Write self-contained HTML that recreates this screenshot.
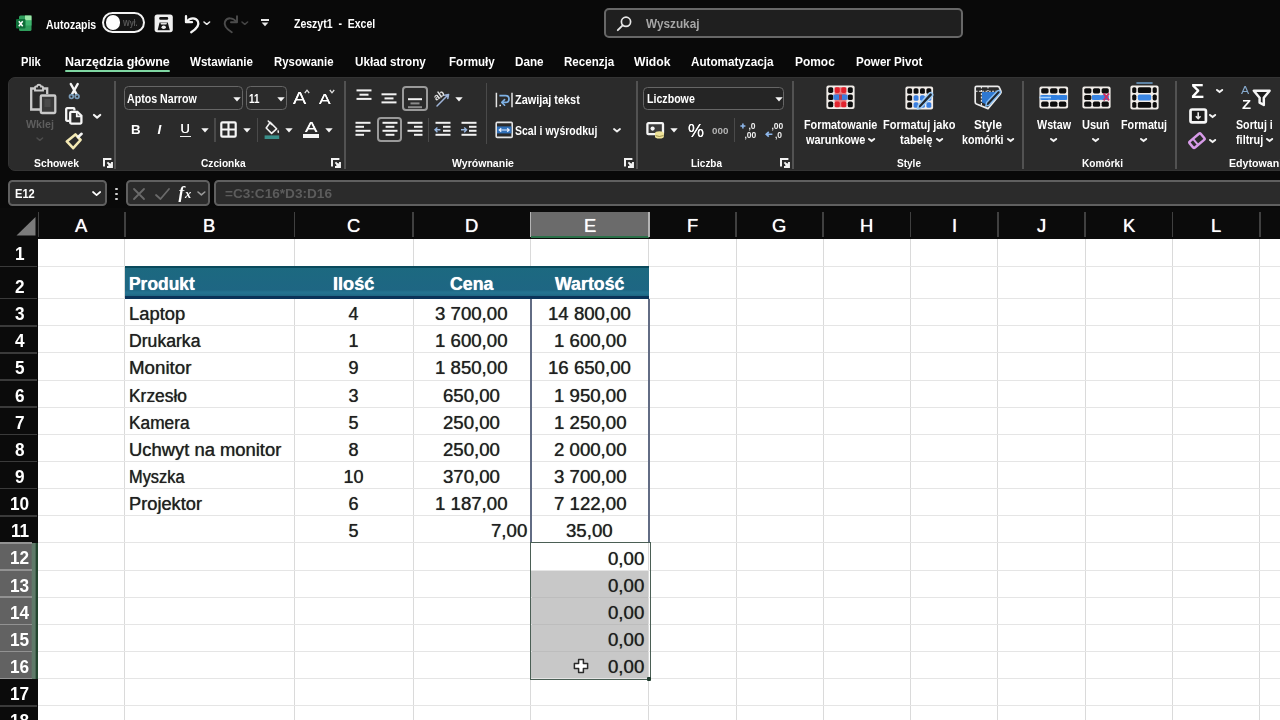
<!DOCTYPE html>
<html><head><meta charset="utf-8"><title>Zeszyt1 - Excel</title>
<style>
html,body{margin:0;padding:0;overflow:hidden}
body{width:1280px;height:720px;overflow:hidden;position:relative;background:#090909;font-family:"Liberation Sans",sans-serif}
.t{position:absolute;white-space:pre;transform-origin:0 50%;display:block}
.b{position:absolute;box-sizing:border-box;display:block}
svg{overflow:visible}
#blur{position:absolute;left:0;top:0;width:1310px;height:750px;filter:blur(0.45px)}
#clip{position:absolute;left:0;top:0;width:1280px;height:720px;overflow:hidden}
</style></head><body><div id="clip"><div id="blur">
<div class="b" style="left:37.70px;top:238.50px;width:1272.30px;height:511.50px;background:#fff"></div>
<div class="b" style="left:125.00px;top:266.30px;width:524.20px;height:32.50px;background:linear-gradient(#1c6980 0,#1e6683 78%,#247290 86%,#247290 90%,#1e6683 100%);border-top:2.5px solid #0a4a5c;border-bottom:3px solid #0a3258"></div>
<div class="b" style="left:531.00px;top:570.10px;width:117.70px;height:108.60px;background:#c8c8c8"></div>
<div class="b" style="left:124.20px;top:238.00px;width:1.00px;height:512.00px;background:#dadada"></div>
<div class="b" style="left:293.90px;top:238.00px;width:1.00px;height:512.00px;background:#dadada"></div>
<div class="b" style="left:412.70px;top:238.00px;width:1.00px;height:512.00px;background:#dadada"></div>
<div class="b" style="left:530.10px;top:238.00px;width:1.00px;height:512.00px;background:#dadada"></div>
<div class="b" style="left:648.20px;top:238.00px;width:1.00px;height:512.00px;background:#dadada"></div>
<div class="b" style="left:735.50px;top:238.00px;width:1.00px;height:512.00px;background:#dadada"></div>
<div class="b" style="left:822.80px;top:238.00px;width:1.00px;height:512.00px;background:#dadada"></div>
<div class="b" style="left:910.10px;top:238.00px;width:1.00px;height:512.00px;background:#dadada"></div>
<div class="b" style="left:997.40px;top:238.00px;width:1.00px;height:512.00px;background:#dadada"></div>
<div class="b" style="left:1084.70px;top:238.00px;width:1.00px;height:512.00px;background:#dadada"></div>
<div class="b" style="left:1172.00px;top:238.00px;width:1.00px;height:512.00px;background:#dadada"></div>
<div class="b" style="left:1259.30px;top:238.00px;width:1.00px;height:512.00px;background:#dadada"></div>
<div class="b" style="left:37.70px;top:265.80px;width:1272.30px;height:1.00px;background:#e5e5e5"></div>
<div class="b" style="left:37.70px;top:298.10px;width:1272.30px;height:1.00px;background:#e5e5e5"></div>
<div class="b" style="left:37.70px;top:325.25px;width:1272.30px;height:1.00px;background:#e5e5e5"></div>
<div class="b" style="left:37.70px;top:352.40px;width:1272.30px;height:1.00px;background:#e5e5e5"></div>
<div class="b" style="left:37.70px;top:379.55px;width:1272.30px;height:1.00px;background:#e5e5e5"></div>
<div class="b" style="left:37.70px;top:406.70px;width:1272.30px;height:1.00px;background:#e5e5e5"></div>
<div class="b" style="left:37.70px;top:433.85px;width:1272.30px;height:1.00px;background:#e5e5e5"></div>
<div class="b" style="left:37.70px;top:461.00px;width:1272.30px;height:1.00px;background:#e5e5e5"></div>
<div class="b" style="left:37.70px;top:488.15px;width:1272.30px;height:1.00px;background:#e5e5e5"></div>
<div class="b" style="left:37.70px;top:515.30px;width:1272.30px;height:1.00px;background:#e5e5e5"></div>
<div class="b" style="left:37.70px;top:542.45px;width:1272.30px;height:1.00px;background:#e5e5e5"></div>
<div class="b" style="left:37.70px;top:569.60px;width:1272.30px;height:1.00px;background:#e5e5e5"></div>
<div class="b" style="left:37.70px;top:596.75px;width:1272.30px;height:1.00px;background:#e5e5e5"></div>
<div class="b" style="left:37.70px;top:623.90px;width:1272.30px;height:1.00px;background:#e5e5e5"></div>
<div class="b" style="left:37.70px;top:651.05px;width:1272.30px;height:1.00px;background:#e5e5e5"></div>
<div class="b" style="left:37.70px;top:678.20px;width:1272.30px;height:1.00px;background:#e5e5e5"></div>
<div class="b" style="left:37.70px;top:705.35px;width:1272.30px;height:1.00px;background:#e5e5e5"></div>
<div class="b" style="left:37.70px;top:732.50px;width:1272.30px;height:1.00px;background:#e5e5e5"></div>
<div class="b" style="left:125.00px;top:266.30px;width:524.20px;height:32.50px;background:linear-gradient(#1c6980 0,#1e6683 78%,#247290 86%,#247290 90%,#1e6683 100%);border-top:2.5px solid #0a4a5c;border-bottom:3px solid #0a3258"></div>
<div class="b" style="left:531.50px;top:570.60px;width:116.70px;height:107.60px;background:#c8c8c8"></div>
<div class="b" style="left:531.50px;top:596.75px;width:116.70px;height:1.00px;background:#bdbdbd"></div>
<div class="b" style="left:531.50px;top:623.90px;width:116.70px;height:1.00px;background:#bdbdbd"></div>
<div class="b" style="left:531.50px;top:651.05px;width:116.70px;height:1.00px;background:#bdbdbd"></div>
<div class="b" style="left:529.60px;top:298.80px;width:2.00px;height:244.15px;background:#626c84"></div>
<div class="b" style="left:647.80px;top:298.80px;width:2.00px;height:244.15px;background:#626c84"></div>
<div class="b" style="left:529.60px;top:541.75px;width:121.20px;height:137.95px;border:1.7px solid #4b5f55"></div>
<div class="b" style="left:647.20px;top:676.50px;width:4.00px;height:4.00px;background:#1f3b2d;border-radius:1px"></div>
<span class="t" style="left:129.40px;top:305.16px;font-size:18px;line-height:18px;font-weight:400;color:#202020;transform:scaleX(1.0207);text-shadow:0 0 0.7px #404040;">Laptop</span>
<span class="t" style="left:129.40px;top:332.31px;font-size:18px;line-height:18px;font-weight:400;color:#202020;transform:scaleX(0.9790);text-shadow:0 0 0.7px #404040;">Drukarka</span>
<span class="t" style="left:129.40px;top:359.46px;font-size:18px;line-height:18px;font-weight:400;color:#202020;transform:scaleX(1.0411);text-shadow:0 0 0.7px #404040;">Monitor</span>
<span class="t" style="left:129.40px;top:386.61px;font-size:18px;line-height:18px;font-weight:400;color:#202020;transform:scaleX(0.9662);text-shadow:0 0 0.7px #404040;">Krzesło</span>
<span class="t" style="left:129.40px;top:413.76px;font-size:18px;line-height:18px;font-weight:400;color:#202020;transform:scaleX(0.9598);text-shadow:0 0 0.7px #404040;">Kamera</span>
<span class="t" style="left:129.40px;top:440.91px;font-size:18px;line-height:18px;font-weight:400;color:#202020;transform:scaleX(1.0217);text-shadow:0 0 0.7px #404040;">Uchwyt na monitor</span>
<span class="t" style="left:129.40px;top:468.06px;font-size:18px;line-height:18px;font-weight:400;color:#202020;transform:scaleX(0.9096);text-shadow:0 0 0.7px #404040;">Myszka</span>
<span class="t" style="left:129.40px;top:495.21px;font-size:18px;line-height:18px;font-weight:400;color:#202020;transform:scaleX(1.0134);text-shadow:0 0 0.7px #404040;">Projektor</span>
<span class="t" style="left:348.59px;top:305.16px;font-size:18px;line-height:18px;font-weight:400;color:#202020;text-shadow:0 0 0.7px #404040;">4</span>
<span class="t" style="left:348.59px;top:332.31px;font-size:18px;line-height:18px;font-weight:400;color:#202020;text-shadow:0 0 0.7px #404040;">1</span>
<span class="t" style="left:348.59px;top:359.46px;font-size:18px;line-height:18px;font-weight:400;color:#202020;text-shadow:0 0 0.7px #404040;">9</span>
<span class="t" style="left:348.59px;top:386.61px;font-size:18px;line-height:18px;font-weight:400;color:#202020;text-shadow:0 0 0.7px #404040;">3</span>
<span class="t" style="left:348.59px;top:413.76px;font-size:18px;line-height:18px;font-weight:400;color:#202020;text-shadow:0 0 0.7px #404040;">5</span>
<span class="t" style="left:348.59px;top:440.91px;font-size:18px;line-height:18px;font-weight:400;color:#202020;text-shadow:0 0 0.7px #404040;">8</span>
<span class="t" style="left:343.58px;top:468.06px;font-size:18px;line-height:18px;font-weight:400;color:#202020;text-shadow:0 0 0.7px #404040;">10</span>
<span class="t" style="left:348.59px;top:495.21px;font-size:18px;line-height:18px;font-weight:400;color:#202020;text-shadow:0 0 0.7px #404040;">6</span>
<span class="t" style="left:348.59px;top:522.36px;font-size:18px;line-height:18px;font-weight:400;color:#202020;text-shadow:0 0 0.7px #404040;">5</span>
<span class="t" style="left:435.33px;top:305.16px;font-size:18px;line-height:18px;font-weight:400;color:#202020;transform:scaleX(1.0350);text-shadow:0 0 0.7px #404040;">3 700,00</span>
<span class="t" style="left:435.33px;top:332.31px;font-size:18px;line-height:18px;font-weight:400;color:#202020;transform:scaleX(1.0350);text-shadow:0 0 0.7px #404040;">1 600,00</span>
<span class="t" style="left:435.33px;top:359.46px;font-size:18px;line-height:18px;font-weight:400;color:#202020;transform:scaleX(1.0350);text-shadow:0 0 0.7px #404040;">1 850,00</span>
<span class="t" style="left:443.11px;top:386.61px;font-size:18px;line-height:18px;font-weight:400;color:#202020;transform:scaleX(1.0350);text-shadow:0 0 0.7px #404040;">650,00</span>
<span class="t" style="left:443.11px;top:413.76px;font-size:18px;line-height:18px;font-weight:400;color:#202020;transform:scaleX(1.0350);text-shadow:0 0 0.7px #404040;">250,00</span>
<span class="t" style="left:443.11px;top:440.91px;font-size:18px;line-height:18px;font-weight:400;color:#202020;transform:scaleX(1.0350);text-shadow:0 0 0.7px #404040;">250,00</span>
<span class="t" style="left:443.11px;top:468.06px;font-size:18px;line-height:18px;font-weight:400;color:#202020;transform:scaleX(1.0350);text-shadow:0 0 0.7px #404040;">370,00</span>
<span class="t" style="left:435.33px;top:495.21px;font-size:18px;line-height:18px;font-weight:400;color:#202020;transform:scaleX(1.0350);text-shadow:0 0 0.7px #404040;">1 187,00</span>
<span class="t" style="left:490.93px;top:522.36px;font-size:18px;line-height:18px;font-weight:400;color:#202020;transform:scaleX(1.0350);text-shadow:0 0 0.7px #404040;">7,00</span>
<span class="t" style="left:548.36px;top:305.16px;font-size:18px;line-height:18px;font-weight:400;color:#202020;transform:scaleX(1.0350);text-shadow:0 0 0.7px #404040;">14 800,00</span>
<span class="t" style="left:553.53px;top:332.31px;font-size:18px;line-height:18px;font-weight:400;color:#202020;transform:scaleX(1.0350);text-shadow:0 0 0.7px #404040;">1 600,00</span>
<span class="t" style="left:548.36px;top:359.46px;font-size:18px;line-height:18px;font-weight:400;color:#202020;transform:scaleX(1.0350);text-shadow:0 0 0.7px #404040;">16 650,00</span>
<span class="t" style="left:553.53px;top:386.61px;font-size:18px;line-height:18px;font-weight:400;color:#202020;transform:scaleX(1.0350);text-shadow:0 0 0.7px #404040;">1 950,00</span>
<span class="t" style="left:553.53px;top:413.76px;font-size:18px;line-height:18px;font-weight:400;color:#202020;transform:scaleX(1.0350);text-shadow:0 0 0.7px #404040;">1 250,00</span>
<span class="t" style="left:553.53px;top:440.91px;font-size:18px;line-height:18px;font-weight:400;color:#202020;transform:scaleX(1.0350);text-shadow:0 0 0.7px #404040;">2 000,00</span>
<span class="t" style="left:553.53px;top:468.06px;font-size:18px;line-height:18px;font-weight:400;color:#202020;transform:scaleX(1.0350);text-shadow:0 0 0.7px #404040;">3 700,00</span>
<span class="t" style="left:553.53px;top:495.21px;font-size:18px;line-height:18px;font-weight:400;color:#202020;transform:scaleX(1.0350);text-shadow:0 0 0.7px #404040;">7 122,00</span>
<span class="t" style="left:566.49px;top:522.36px;font-size:18px;line-height:18px;font-weight:400;color:#202020;transform:scaleX(1.0350);text-shadow:0 0 0.7px #404040;">35,00</span>
<span class="t" style="left:608.13px;top:549.51px;font-size:18px;line-height:18px;font-weight:400;color:#1c1c1c;transform:scaleX(1.0350);text-shadow:0 0 0.7px #404040;">0,00</span>
<span class="t" style="left:608.13px;top:576.66px;font-size:18px;line-height:18px;font-weight:400;color:#1c1c1c;transform:scaleX(1.0350);text-shadow:0 0 0.7px #404040;">0,00</span>
<span class="t" style="left:608.13px;top:603.81px;font-size:18px;line-height:18px;font-weight:400;color:#1c1c1c;transform:scaleX(1.0350);text-shadow:0 0 0.7px #404040;">0,00</span>
<span class="t" style="left:608.13px;top:630.96px;font-size:18px;line-height:18px;font-weight:400;color:#1c1c1c;transform:scaleX(1.0350);text-shadow:0 0 0.7px #404040;">0,00</span>
<span class="t" style="left:608.13px;top:658.11px;font-size:18px;line-height:18px;font-weight:400;color:#1c1c1c;transform:scaleX(1.0350);text-shadow:0 0 0.7px #404040;">0,00</span>
<span class="t" style="left:129.40px;top:275.79px;font-size:17.5px;line-height:17.5px;font-weight:700;color:#fff;transform:scaleX(0.9951);text-shadow:0 0 0.8px #fff;">Produkt</span>
<span class="t" style="left:332.85px;top:275.79px;font-size:17.5px;line-height:17.5px;font-weight:700;color:#fff;transform:scaleX(1.0403);text-shadow:0 0 0.8px #fff;">Ilość</span>
<span class="t" style="left:449.85px;top:275.79px;font-size:17.5px;line-height:17.5px;font-weight:700;color:#fff;transform:scaleX(1.0164);text-shadow:0 0 0.8px #fff;">Cena</span>
<span class="t" style="left:555.05px;top:275.79px;font-size:17.5px;line-height:17.5px;font-weight:700;color:#fff;transform:scaleX(1.0160);text-shadow:0 0 0.8px #fff;">Wartość</span>
<svg class="b" style="left:573.00px;top:658.00px;" width="16" height="16" viewBox="0 0 16 16"><path d="M5.6 1.4h4.8v4.2h4.2v4.8h-4.2v4.2H5.6v-4.2H1.4V5.6h4.2z" fill="#fff" stroke="#2a2a2a" stroke-width="1.5" stroke-linejoin="round"/></svg>
<div class="b" style="left:0.00px;top:207.50px;width:1310.00px;height:31.00px;background:#0b0b0b"></div>
<div class="b" style="left:530.60px;top:211.60px;width:118.10px;height:26.40px;background:#6b6b6b;border-bottom:2px solid #2a7048"></div>
<div class="b" style="left:37.60px;top:212.00px;width:1.80px;height:25.00px;background:#404040"></div>
<div class="b" style="left:123.80px;top:212.00px;width:1.80px;height:25.00px;background:#404040"></div>
<div class="b" style="left:293.50px;top:212.00px;width:1.80px;height:25.00px;background:#404040"></div>
<div class="b" style="left:412.30px;top:212.00px;width:1.80px;height:25.00px;background:#404040"></div>
<div class="b" style="left:529.70px;top:212.00px;width:1.80px;height:25.00px;background:#b4b4b4"></div>
<div class="b" style="left:647.80px;top:212.00px;width:1.80px;height:25.00px;background:#b4b4b4"></div>
<div class="b" style="left:735.10px;top:212.00px;width:1.80px;height:25.00px;background:#404040"></div>
<div class="b" style="left:822.40px;top:212.00px;width:1.80px;height:25.00px;background:#404040"></div>
<div class="b" style="left:909.70px;top:212.00px;width:1.80px;height:25.00px;background:#404040"></div>
<div class="b" style="left:997.00px;top:212.00px;width:1.80px;height:25.00px;background:#404040"></div>
<div class="b" style="left:1084.30px;top:212.00px;width:1.80px;height:25.00px;background:#404040"></div>
<div class="b" style="left:1171.60px;top:212.00px;width:1.80px;height:25.00px;background:#404040"></div>
<div class="b" style="left:1258.90px;top:212.00px;width:1.80px;height:25.00px;background:#404040"></div>
<span class="t" style="left:75.45px;top:216.32px;font-size:19px;line-height:19px;font-weight:400;color:#fff;transform:scaleX(0.9700);text-shadow:0 0 0.8px #fff;">A</span>
<span class="t" style="left:203.40px;top:216.32px;font-size:19px;line-height:19px;font-weight:400;color:#fff;transform:scaleX(0.9700);text-shadow:0 0 0.8px #fff;">B</span>
<span class="t" style="left:347.14px;top:216.32px;font-size:19px;line-height:19px;font-weight:400;color:#fff;transform:scaleX(0.9700);text-shadow:0 0 0.8px #fff;">C</span>
<span class="t" style="left:465.24px;top:216.32px;font-size:19px;line-height:19px;font-weight:400;color:#fff;transform:scaleX(0.9700);text-shadow:0 0 0.8px #fff;">D</span>
<span class="t" style="left:583.50px;top:216.32px;font-size:19px;line-height:19px;font-weight:400;color:#fff;transform:scaleX(0.9700);text-shadow:0 0 0.8px #fff;">E</span>
<span class="t" style="left:686.72px;top:216.32px;font-size:19px;line-height:19px;font-weight:400;color:#fff;transform:scaleX(0.9700);text-shadow:0 0 0.8px #fff;">F</span>
<span class="t" style="left:772.48px;top:216.32px;font-size:19px;line-height:19px;font-weight:400;color:#fff;transform:scaleX(0.9700);text-shadow:0 0 0.8px #fff;">G</span>
<span class="t" style="left:860.29px;top:216.32px;font-size:19px;line-height:19px;font-weight:400;color:#fff;transform:scaleX(0.9700);text-shadow:0 0 0.8px #fff;">H</span>
<span class="t" style="left:951.69px;top:216.32px;font-size:19px;line-height:19px;font-weight:400;color:#fff;transform:scaleX(0.9700);text-shadow:0 0 0.8px #fff;">I</span>
<span class="t" style="left:1036.94px;top:216.32px;font-size:19px;line-height:19px;font-weight:400;color:#fff;transform:scaleX(0.9700);text-shadow:0 0 0.8px #fff;">J</span>
<span class="t" style="left:1122.70px;top:216.32px;font-size:19px;line-height:19px;font-weight:400;color:#fff;transform:scaleX(0.9700);text-shadow:0 0 0.8px #fff;">K</span>
<span class="t" style="left:1211.02px;top:216.32px;font-size:19px;line-height:19px;font-weight:400;color:#fff;transform:scaleX(0.9700);text-shadow:0 0 0.8px #fff;">L</span>
<svg class="b" style="left:15.00px;top:216.00px;" width="22" height="20" viewBox="0 0 22 20"><path d="M20.5 1 V19.5 H1.5z" fill="#7b7b7b"/></svg>
<div class="b" style="left:0.00px;top:238.00px;width:37.70px;height:512.00px;background:#0b0b0b"></div>
<div class="b" style="left:0.00px;top:542.95px;width:37.70px;height:135.75px;background:linear-gradient(90deg,#626262 0,#626262 31.2px,#5f7a69 32.2px,#5f7a69 35.2px,#23452f 36px);"></div>
<div class="b" style="left:0.00px;top:265.50px;width:37.00px;height:1.60px;background:#3a3a3a"></div>
<div class="b" style="left:0.00px;top:297.80px;width:37.00px;height:1.60px;background:#3a3a3a"></div>
<div class="b" style="left:0.00px;top:324.95px;width:37.00px;height:1.60px;background:#3a3a3a"></div>
<div class="b" style="left:0.00px;top:352.10px;width:37.00px;height:1.60px;background:#3a3a3a"></div>
<div class="b" style="left:0.00px;top:379.25px;width:37.00px;height:1.60px;background:#3a3a3a"></div>
<div class="b" style="left:0.00px;top:406.40px;width:37.00px;height:1.60px;background:#3a3a3a"></div>
<div class="b" style="left:0.00px;top:433.55px;width:37.00px;height:1.60px;background:#3a3a3a"></div>
<div class="b" style="left:0.00px;top:460.70px;width:37.00px;height:1.60px;background:#3a3a3a"></div>
<div class="b" style="left:0.00px;top:487.85px;width:37.00px;height:1.60px;background:#3a3a3a"></div>
<div class="b" style="left:0.00px;top:515.00px;width:37.00px;height:1.60px;background:#3a3a3a"></div>
<div class="b" style="left:0.00px;top:542.15px;width:32.20px;height:1.60px;background:#929292"></div>
<div class="b" style="left:0.00px;top:569.30px;width:32.20px;height:1.60px;background:#929292"></div>
<div class="b" style="left:0.00px;top:596.45px;width:32.20px;height:1.60px;background:#929292"></div>
<div class="b" style="left:0.00px;top:623.60px;width:32.20px;height:1.60px;background:#929292"></div>
<div class="b" style="left:0.00px;top:650.75px;width:32.20px;height:1.60px;background:#929292"></div>
<div class="b" style="left:0.00px;top:677.90px;width:32.20px;height:1.60px;background:#929292"></div>
<div class="b" style="left:0.00px;top:705.05px;width:37.00px;height:1.60px;background:#3a3a3a"></div>
<div class="b" style="left:0.00px;top:732.20px;width:37.00px;height:1.60px;background:#3a3a3a"></div>
<span class="t" style="left:14.61px;top:245.14px;font-size:18.5px;line-height:18.5px;font-weight:700;color:#fff;transform:scaleX(0.9300);">1</span>
<span class="t" style="left:14.61px;top:277.84px;font-size:18.5px;line-height:18.5px;font-weight:700;color:#fff;transform:scaleX(0.9300);">2</span>
<span class="t" style="left:14.61px;top:305.14px;font-size:18.5px;line-height:18.5px;font-weight:700;color:#fff;transform:scaleX(0.9300);">3</span>
<span class="t" style="left:14.61px;top:332.29px;font-size:18.5px;line-height:18.5px;font-weight:700;color:#fff;transform:scaleX(0.9300);">4</span>
<span class="t" style="left:14.61px;top:359.44px;font-size:18.5px;line-height:18.5px;font-weight:700;color:#fff;transform:scaleX(0.9300);">5</span>
<span class="t" style="left:14.61px;top:386.59px;font-size:18.5px;line-height:18.5px;font-weight:700;color:#fff;transform:scaleX(0.9300);">6</span>
<span class="t" style="left:14.61px;top:413.74px;font-size:18.5px;line-height:18.5px;font-weight:700;color:#fff;transform:scaleX(0.9300);">7</span>
<span class="t" style="left:14.61px;top:440.89px;font-size:18.5px;line-height:18.5px;font-weight:700;color:#fff;transform:scaleX(0.9300);">8</span>
<span class="t" style="left:14.61px;top:468.04px;font-size:18.5px;line-height:18.5px;font-weight:700;color:#fff;transform:scaleX(0.9300);">9</span>
<span class="t" style="left:10.23px;top:495.19px;font-size:18.5px;line-height:18.5px;font-weight:700;color:#fff;transform:scaleX(0.9300);">10</span>
<span class="t" style="left:10.70px;top:522.34px;font-size:18.5px;line-height:18.5px;font-weight:700;color:#fff;transform:scaleX(0.9300);">11</span>
<span class="t" style="left:10.23px;top:549.49px;font-size:18.5px;line-height:18.5px;font-weight:700;color:#fff;transform:scaleX(0.9300);">12</span>
<span class="t" style="left:10.23px;top:576.64px;font-size:18.5px;line-height:18.5px;font-weight:700;color:#fff;transform:scaleX(0.9300);">13</span>
<span class="t" style="left:10.23px;top:603.79px;font-size:18.5px;line-height:18.5px;font-weight:700;color:#fff;transform:scaleX(0.9300);">14</span>
<span class="t" style="left:10.23px;top:630.94px;font-size:18.5px;line-height:18.5px;font-weight:700;color:#fff;transform:scaleX(0.9300);">15</span>
<span class="t" style="left:10.23px;top:658.09px;font-size:18.5px;line-height:18.5px;font-weight:700;color:#fff;transform:scaleX(0.9300);">16</span>
<span class="t" style="left:10.23px;top:685.24px;font-size:18.5px;line-height:18.5px;font-weight:700;color:#fff;transform:scaleX(0.9300);">17</span>
<span class="t" style="left:10.23px;top:712.39px;font-size:18.5px;line-height:18.5px;font-weight:700;color:#fff;transform:scaleX(0.9300);">18</span>
<span class="t" style="left:10.23px;top:739.54px;font-size:18.5px;line-height:18.5px;font-weight:700;color:#fff;transform:scaleX(0.9300);">19</span>
<div class="b" style="left:7.50px;top:180.20px;width:99.50px;height:25.80px;background:#2b2b2b;border:2px solid #606060;border-radius:4.5px"></div>
<span class="t" style="left:15.00px;top:187.62px;font-size:12.5px;line-height:12.5px;font-weight:700;color:#fff;transform:scaleX(0.8899);">E12</span>
<svg class="b" style="left:92.00px;top:191.20px;" width="9.2" height="6.1" viewBox="0 0 9.2 6.1"><path d="M1 1 L4.6 4.1 L8.2 1" fill="none" stroke="#fff" stroke-width="1.7" stroke-linecap="round" stroke-linejoin="round"/></svg>
<div class="b" style="left:115.40px;top:187.50px;width:2.20px;height:2.20px;background:#d0d0d0;border-radius:1px"></div>
<div class="b" style="left:115.40px;top:192.50px;width:2.20px;height:2.20px;background:#d0d0d0;border-radius:1px"></div>
<div class="b" style="left:115.40px;top:197.50px;width:2.20px;height:2.20px;background:#d0d0d0;border-radius:1px"></div>
<div class="b" style="left:125.50px;top:180.20px;width:84.00px;height:25.80px;background:#2b2b2b;border:2px solid #606060;border-radius:4.5px"></div>
<svg class="b" style="left:132.00px;top:186.50px;" width="14" height="14" viewBox="0 0 14 14"><path d="M2 2 L12 12 M12 2 L2 12" stroke="#6a6a6a" stroke-width="1.8" stroke-linecap="round" fill="none"/></svg>
<svg class="b" style="left:154.00px;top:186.50px;" width="17" height="14" viewBox="0 0 17 14"><path d="M2 8 L6.5 12 L15 2" stroke="#6a6a6a" stroke-width="1.8" stroke-linecap="round" stroke-linejoin="round" fill="none"/></svg>
<span class="t" style="left:178.5px;top:183.5px;font-family:'Liberation Serif',serif;font-style:italic;font-weight:700;font-size:17px;line-height:17px;color:#fff">f</span>
<span class="t" style="left:185px;top:187.5px;font-family:'Liberation Serif',serif;font-style:italic;font-weight:700;font-size:12.5px;line-height:13px;color:#fff">x</span>
<svg class="b" style="left:197.20px;top:191.30px;" width="8.8" height="5.9" viewBox="0 0 8.8 5.9"><path d="M1 1 L4.4 3.9 L7.8 1" fill="none" stroke="#9a9a9a" stroke-width="1.6" stroke-linecap="round" stroke-linejoin="round"/></svg>
<div class="b" style="left:214.00px;top:180.20px;width:1080.00px;height:25.80px;background:#2b2b2b;border:2px solid #606060;border-radius:4.5px"></div>
<span class="t" style="left:225.00px;top:187.82px;font-size:12.5px;line-height:12.5px;font-weight:700;color:#5c5c5c;transform:scaleX(1.0884);">=C3:C16*D3:D16</span>
<svg class="b" style="left:15.50px;top:15.00px;" width="16" height="17" viewBox="0 0 16 17"><rect x="3" y="0.5" width="12.5" height="15.5" rx="1.5" fill="#2f9e5c"/><rect x="9" y="0.5" width="6.5" height="5" fill="#9be8a8"/><rect x="9" y="5.5" width="6.5" height="5" fill="#3fb56f"/><rect x="0" y="4" width="9.5" height="9.5" rx="1" fill="#0e6e38"/><path d="M2.8 6.3 L6.7 11.3 M6.7 6.3 L2.8 11.3" stroke="#fff" stroke-width="1.5"/></svg>
<span class="t" style="left:45.80px;top:18.64px;font-size:12px;line-height:12px;font-weight:700;color:#fff;transform:scaleX(0.8754);">Autozapis</span>
<div class="b" style="left:102.30px;top:12.00px;width:42.40px;height:21.00px;border:2.4px solid #f4f4f4;border-radius:11px;background:#141414"></div>
<div class="b" style="left:105.80px;top:15.40px;width:14.40px;height:14.20px;background:#fff;border-radius:7.2px"></div>
<span class="t" style="left:123.40px;top:19.20px;font-size:8.5px;line-height:8.5px;font-weight:700;color:#585858;transform:scaleX(0.8426);">Wył.</span>
<svg class="b" style="left:153.50px;top:14.00px;" width="19.5" height="19" viewBox="0 0 19.5 19"><rect x="0.6" y="0.6" width="18.2" height="17.6" rx="2.6" fill="#f0f0f0"/><rect x="5.2" y="3" width="9" height="2.8" rx="1.2" fill="#141414"/><path d="M3.6 16.2 L5.6 8.6 H13.8 L15.8 16.2z" fill="#141414"/><ellipse cx="9.7" cy="13.2" rx="2.2" ry="1.7" fill="#f0f0f0"/><path d="M6.4 8.8 H13 L12.4 10.6 H7z" fill="#e0e0e0"/></svg>
<svg class="b" style="left:184.00px;top:13.50px;" width="17" height="20" viewBox="0 0 17 20"><path d="M2 2.2 V8.2 H8" fill="none" stroke="#f4f4f4" stroke-width="2.3" stroke-linecap="round" stroke-linejoin="round"/><path d="M2.6 7.8 C6 3.2 12.2 3.2 14 7.6 C15.6 11.6 12 15.2 7.2 18.2" fill="none" stroke="#f4f4f4" stroke-width="2.3" stroke-linecap="round"/></svg>
<svg class="b" style="left:203.40px;top:21.10px;" width="7.6" height="5.3" viewBox="0 0 7.6 5.3"><path d="M1 1 L3.8 3.3 L6.6 1" fill="none" stroke="#e8e8e8" stroke-width="1.6" stroke-linecap="round" stroke-linejoin="round"/></svg>
<svg class="b" style="left:221.50px;top:13.50px;" width="17" height="20" viewBox="0 0 17 20"><g transform="translate(17,0) scale(-1,1)"><path d="M2 2.2 V8.2 H8" fill="none" stroke="#4c4c4c" stroke-width="1.9" stroke-linecap="round" stroke-linejoin="round"/><path d="M2.6 7.8 C6 3.2 12.2 3.2 14 7.6 C15.6 11.6 12 15.2 7.2 18.2" fill="none" stroke="#4c4c4c" stroke-width="1.9" stroke-linecap="round"/></g></svg>
<svg class="b" style="left:240.80px;top:21.10px;" width="7.6" height="5.3" viewBox="0 0 7.6 5.3"><path d="M1 1 L3.8 3.3 L6.6 1" fill="none" stroke="#444" stroke-width="1.6" stroke-linecap="round" stroke-linejoin="round"/></svg>
<div class="b" style="left:261.30px;top:19.20px;width:8.00px;height:1.80px;background:#e8e8e8"></div>
<svg class="b" style="left:261.30px;top:22.30px;" width="8" height="5" viewBox="0 0 8 5"><path d="M0.6 0.5 H7.4 L4 4.3z" fill="#e8e8e8"/></svg>
<span class="t" style="left:293.80px;top:18.04px;font-size:12px;line-height:12px;font-weight:700;color:#fff;transform:scaleX(0.8758);">Zeszyt1  -  Excel</span>
<div class="b" style="left:604.20px;top:7.80px;width:358.40px;height:30.40px;background:#1f1f1f;border:2px solid #676767;border-radius:5px"></div>
<svg class="b" style="left:616.00px;top:14.50px;" width="17" height="17" viewBox="0 0 17 17"><circle cx="10" cy="6.8" r="4.6" fill="none" stroke="#e6e6e6" stroke-width="1.7"/><path d="M6.6 10.4 L1.8 15.2" stroke="#e6e6e6" stroke-width="1.9" stroke-linecap="round"/></svg>
<span class="t" style="left:645.50px;top:17.62px;font-size:12.5px;line-height:12.5px;font-weight:700;color:#a6a6a6;transform:scaleX(0.9427);">Wyszukaj</span>
<span class="t" style="left:21.00px;top:54.77px;font-size:13.5px;line-height:13.5px;font-weight:700;color:#fff;transform:scaleX(0.8245);">Plik</span>
<span class="t" style="left:64.80px;top:54.77px;font-size:13.5px;line-height:13.5px;font-weight:700;color:#fff;transform:scaleX(0.9251);">Narzędzia główne</span>
<span class="t" style="left:189.50px;top:54.77px;font-size:13.5px;line-height:13.5px;font-weight:700;color:#fff;transform:scaleX(0.8568);">Wstawianie</span>
<span class="t" style="left:273.70px;top:54.77px;font-size:13.5px;line-height:13.5px;font-weight:700;color:#fff;transform:scaleX(0.8436);">Rysowanie</span>
<span class="t" style="left:355.40px;top:54.77px;font-size:13.5px;line-height:13.5px;font-weight:700;color:#fff;transform:scaleX(0.8657);">Układ strony</span>
<span class="t" style="left:449.00px;top:54.77px;font-size:13.5px;line-height:13.5px;font-weight:700;color:#fff;transform:scaleX(0.8598);">Formuły</span>
<span class="t" style="left:515.40px;top:54.77px;font-size:13.5px;line-height:13.5px;font-weight:700;color:#fff;transform:scaleX(0.8663);">Dane</span>
<span class="t" style="left:563.60px;top:54.77px;font-size:13.5px;line-height:13.5px;font-weight:700;color:#fff;transform:scaleX(0.8577);">Recenzja</span>
<span class="t" style="left:633.60px;top:54.77px;font-size:13.5px;line-height:13.5px;font-weight:700;color:#fff;transform:scaleX(0.9015);">Widok</span>
<span class="t" style="left:691.40px;top:54.77px;font-size:13.5px;line-height:13.5px;font-weight:700;color:#fff;transform:scaleX(0.8648);">Automatyzacja</span>
<span class="t" style="left:795.20px;top:54.77px;font-size:13.5px;line-height:13.5px;font-weight:700;color:#fff;transform:scaleX(0.8841);">Pomoc</span>
<span class="t" style="left:856.00px;top:54.77px;font-size:13.5px;line-height:13.5px;font-weight:700;color:#fff;transform:scaleX(0.8605);">Power Pivot</span>
<div class="b" style="left:64.80px;top:70.30px;width:105.00px;height:2.20px;background:#7fd6a2;border-radius:1px"></div>
<div class="b" style="left:8.00px;top:76.60px;width:1310.00px;height:94.90px;background:#2b2b2b;border-radius:7px;border:1px solid #343434"></div>
<div class="b" style="left:114.00px;top:81.00px;width:2.00px;height:88.00px;background:#525252"></div>
<div class="b" style="left:343.50px;top:81.00px;width:2.00px;height:88.00px;background:#525252"></div>
<div class="b" style="left:635.50px;top:81.00px;width:2.00px;height:88.00px;background:#525252"></div>
<div class="b" style="left:792.00px;top:81.00px;width:2.00px;height:88.00px;background:#525252"></div>
<div class="b" style="left:1022.00px;top:81.00px;width:2.00px;height:88.00px;background:#525252"></div>
<div class="b" style="left:1174.50px;top:81.00px;width:2.00px;height:88.00px;background:#525252"></div>
<span class="t" style="left:33.50px;top:158.27px;font-size:11.5px;line-height:11.5px;font-weight:700;color:#fff;transform:scaleX(0.9025);">Schowek</span>
<svg class="b" style="left:102.60px;top:157.60px;" width="10" height="10" viewBox="0 0 10 10"><path d="M1 8.4 V1 H8.4" fill="none" stroke="#f2f2f2" stroke-width="2"/><path d="M4 9 H9 V4 M9 9 L4.4 4.4" fill="none" stroke="#f2f2f2" stroke-width="1.9"/><rect x="5.4" y="5.4" width="3.6" height="3.6" fill="#f2f2f2"/></svg>
<svg class="b" style="left:28.50px;top:83.50px;" width="28.5" height="31" viewBox="0 0 28.5 31"><path d="M6 4.5 H2.2 V25.5 H11" fill="none" stroke="#cacaca" stroke-width="2.3"/><path d="M13.5 4.5 H18.2 V10" fill="none" stroke="#cacaca" stroke-width="2.3"/><path d="M6 6.5 V3.5 Q6 2.5 7 2.5 H8 Q8.3 0.8 10 0.8 Q11.8 0.8 12 2.5 H13 Q14 2.5 14 3.5 V6.5z" fill="none" stroke="#cacaca" stroke-width="1.9"/><rect x="11.8" y="11.5" width="14.5" height="17.5" rx="1" fill="#3a3a3a" stroke="#cacaca" stroke-width="2.3"/><rect x="15.5" y="15" width="6" height="8" fill="#4a4a4a"/></svg>
<span class="t" style="left:26.30px;top:118.87px;font-size:11.5px;line-height:11.5px;font-weight:700;color:#5e5e5e;transform:scaleX(0.9319);">Wklej</span>
<svg class="b" style="left:35.80px;top:137.20px;" width="7.6" height="5.3" viewBox="0 0 7.6 5.3"><path d="M1 1 L3.8 3.3 L6.6 1" fill="none" stroke="#4c4c4c" stroke-width="1.5" stroke-linecap="round" stroke-linejoin="round"/></svg>
<svg class="b" style="left:67.50px;top:82.50px;" width="12.5" height="17.5" viewBox="0 0 12.5 17.5"><path d="M2.8 1 L8.4 11 M9.7 1 L4.1 11" stroke="#f6f6f6" stroke-width="2.5" stroke-linecap="round" fill="none"/><circle cx="3.4" cy="13.6" r="1.9" fill="none" stroke="#7a9cba" stroke-width="1.7"/><circle cx="9.1" cy="13.6" r="1.9" fill="none" stroke="#7a9cba" stroke-width="1.7"/></svg>
<svg class="b" style="left:64.50px;top:107.00px;" width="18.5" height="18" viewBox="0 0 18.5 18"><path d="M4.4 13.8 H2.2 Q1.2 13.8 1.2 12.8 V2.2 Q1.2 1.2 2.2 1.2 H8.4 Q9.4 1.2 9.4 2.2 V3.6" fill="none" stroke="#f6f6f6" stroke-width="2.3"/><path d="M6.2 4.8 H12.4 L16.4 8.8 V15.6 Q16.4 16.6 15.4 16.6 H6.2 Q5.2 16.6 5.2 15.6 V5.8 Q5.2 4.8 6.2 4.8z" fill="#2b2b2b" stroke="#f6f6f6" stroke-width="2.3"/><path d="M11.8 5.2 V9.4 H16" fill="none" stroke="#f6f6f6" stroke-width="1.8"/></svg>
<svg class="b" style="left:92.70px;top:114.05px;" width="8.2" height="5.6" viewBox="0 0 8.2 5.6"><path d="M1 1 L4.1 3.6 L7.2 1" fill="none" stroke="#f4f4f4" stroke-width="2.2" stroke-linecap="round" stroke-linejoin="round"/></svg>
<svg class="b" style="left:65.00px;top:132.00px;" width="18.5" height="18" viewBox="0 0 18.5 18"><path d="M1.8 9.4 L10.4 2.4 L15.6 8 L8.2 16.2z" fill="none" stroke="#f3e9b4" stroke-width="2.6" stroke-linejoin="round"/><path d="M13.2 5 L16.6 1.8" stroke="#f6f6f6" stroke-width="2.6" stroke-linecap="round"/></svg>
<span class="t" style="left:200.70px;top:158.27px;font-size:11.5px;line-height:11.5px;font-weight:700;color:#fff;transform:scaleX(0.8832);">Czcionka</span>
<svg class="b" style="left:331.00px;top:157.60px;" width="10" height="10" viewBox="0 0 10 10"><path d="M1 8.4 V1 H8.4" fill="none" stroke="#f2f2f2" stroke-width="2"/><path d="M4 9 H9 V4 M9 9 L4.4 4.4" fill="none" stroke="#f2f2f2" stroke-width="1.9"/><rect x="5.4" y="5.4" width="3.6" height="3.6" fill="#f2f2f2"/></svg>
<div class="b" style="left:123.60px;top:86.40px;width:119.00px;height:24.00px;background:#2b2b2b;border:1.8px solid #666;border-radius:4.5px"></div>
<span class="t" style="left:127.40px;top:93.24px;font-size:12px;line-height:12px;font-weight:700;color:#fff;transform:scaleX(0.8871);">Aptos Narrow</span>
<svg class="b" style="left:232.60px;top:97.30px;" width="8" height="4.6" viewBox="0 0 8 4.6"><path d="M0.3 0.3 H7.7 L4.0 4.3999999999999995z" fill="#f6f6f6"/></svg>
<div class="b" style="left:245.60px;top:86.40px;width:41.00px;height:24.00px;background:#2b2b2b;border:1.8px solid #666;border-radius:4.5px"></div>
<span class="t" style="left:249.20px;top:93.24px;font-size:12px;line-height:12px;font-weight:700;color:#fff;transform:scaleX(0.8197);">11</span>
<svg class="b" style="left:276.60px;top:97.30px;" width="8" height="4.6" viewBox="0 0 8 4.6"><path d="M0.3 0.3 H7.7 L4.0 4.3999999999999995z" fill="#f6f6f6"/></svg>
<span class="t" style="left:292.60px;top:90.21px;font-size:17px;line-height:17px;font-weight:400;color:#fff;transform:scaleX(1.1636);text-shadow:0 0 0.6px #fff;">A</span>
<svg class="b" style="left:303.80px;top:89.00px;" width="6" height="5" viewBox="0 0 6 5"><path d="M0.8 4 L3 1.2 L5.2 4" stroke="#e0e0e0" stroke-width="1.3" fill="none"/></svg>
<span class="t" style="left:319.00px;top:91.48px;font-size:15.5px;line-height:15.5px;font-weight:400;color:#fff;transform:scaleX(1.1215);text-shadow:0 0 0.6px #fff;">A</span>
<svg class="b" style="left:329.20px;top:89.20px;" width="6" height="5" viewBox="0 0 6 5"><path d="M0.8 1 L3 3.8 L5.2 1" stroke="#e0e0e0" stroke-width="1.3" fill="none"/></svg>
<span class="t" style="left:130.80px;top:122.77px;font-size:13.5px;line-height:13.5px;font-weight:700;color:#fff;transform:scaleX(0.9846);">B</span>
<span class="t" style="left:157.6px;top:122.6px;font-size:13.5px;line-height:13.5px;font-weight:700;font-style:italic;color:#fff">I</span>
<span class="t" style="left:180.50px;top:122.40px;font-size:13px;line-height:13px;font-weight:400;color:#fff;text-shadow:0 0 0.6px #fff;">U</span>
<div class="b" style="left:180.00px;top:135.60px;width:10.60px;height:1.60px;background:#f0f0f0"></div>
<svg class="b" style="left:200.60px;top:127.50px;" width="8" height="4.6" viewBox="0 0 8 4.6"><path d="M0.3 0.3 H7.7 L4.0 4.3999999999999995z" fill="#f6f6f6"/></svg>
<div class="b" style="left:214.30px;top:118.00px;width:1.40px;height:24.00px;background:#4a4a4a"></div>
<svg class="b" style="left:219.50px;top:120.50px;" width="17" height="17" viewBox="0 0 17 17"><rect x="1.3" y="1.3" width="14.4" height="14.4" rx="1.2" fill="none" stroke="#f6f6f6" stroke-width="2.2"/><path d="M8.5 1.5 V15.5 M1.5 8.5 H15.5" stroke="#f6f6f6" stroke-width="2.1"/></svg>
<svg class="b" style="left:242.80px;top:127.50px;" width="8" height="4.6" viewBox="0 0 8 4.6"><path d="M0.3 0.3 H7.7 L4.0 4.3999999999999995z" fill="#f6f6f6"/></svg>
<div class="b" style="left:256.90px;top:118.00px;width:1.40px;height:24.00px;background:#4a4a4a"></div>
<svg class="b" style="left:263.00px;top:119.50px;" width="18.5" height="20" viewBox="0 0 18.5 20"><path d="M7.2 2.4 L13.6 8.8 L8.6 13.4 L3.2 8 z" fill="none" stroke="#f2f2f2" stroke-width="1.6" stroke-linejoin="round"/><path d="M5.2 1 L8.6 4.4" stroke="#f2f2f2" stroke-width="1.5" stroke-linecap="round"/><path d="M15 9.6 Q17 12.4 15.4 13.2 Q13.6 12.6 15 9.6z" fill="#f2f2f2"/><rect x="1.6" y="15.4" width="14.6" height="3.6" fill="#3a8f8a"/></svg>
<svg class="b" style="left:285.20px;top:127.50px;" width="8" height="4.6" viewBox="0 0 8 4.6"><path d="M0.3 0.3 H7.7 L4.0 4.3999999999999995z" fill="#f6f6f6"/></svg>
<span class="t" style="left:305.00px;top:120.33px;font-size:14.5px;line-height:14.5px;font-weight:400;color:#fff;transform:scaleX(1.2821);text-shadow:0 0 0.6px #fff;">A</span>
<div class="b" style="left:303.40px;top:134.40px;width:15.80px;height:3.80px;background:#f4f4f4"></div>
<svg class="b" style="left:325.20px;top:127.50px;" width="8" height="4.6" viewBox="0 0 8 4.6"><path d="M0.3 0.3 H7.7 L4.0 4.3999999999999995z" fill="#f6f6f6"/></svg>
<span class="t" style="left:452.40px;top:158.27px;font-size:11.5px;line-height:11.5px;font-weight:700;color:#fff;transform:scaleX(0.9181);">Wyrównanie</span>
<svg class="b" style="left:623.60px;top:157.60px;" width="10" height="10" viewBox="0 0 10 10"><path d="M1 8.4 V1 H8.4" fill="none" stroke="#f2f2f2" stroke-width="2"/><path d="M4 9 H9 V4 M9 9 L4.4 4.4" fill="none" stroke="#f2f2f2" stroke-width="1.9"/><rect x="5.4" y="5.4" width="3.6" height="3.6" fill="#f2f2f2"/></svg>
<svg class="b" style="left:353.60px;top:88.40px;" width="20" height="20" viewBox="0 0 20 20"><path d="M2.5 2.4000000000000004 H17.5" stroke="#f2f2f2" stroke-width="2.0"/><path d="M5.5 6.7 H14.5" stroke="#f2f2f2" stroke-width="2.0"/><path d="M2.5 10.9 H17.5" stroke="#f2f2f2" stroke-width="2.0"/></svg>
<svg class="b" style="left:379.20px;top:88.40px;" width="20" height="20" viewBox="0 0 20 20"><path d="M2.5 6.3 H17.5" stroke="#f2f2f2" stroke-width="2.0"/><path d="M5.5 10.4 H14.5" stroke="#f2f2f2" stroke-width="2.0"/><path d="M2.5 14.4 H17.5" stroke="#f2f2f2" stroke-width="2.0"/></svg>
<div class="b" style="left:402.40px;top:85.80px;width:25.20px;height:25.60px;background:#2a2a2a;border:2px solid #9a9a9a;border-radius:4px"></div>
<svg class="b" style="left:405.00px;top:88.80px;" width="20" height="20" viewBox="0 0 20 20"><path d="M3 10.2 H17" stroke="#f2f2f2" stroke-width="2.0"/></svg>
<svg class="b" style="left:405.00px;top:88.80px;" width="20" height="20" viewBox="0 0 20 20"><path d="M5.5 14.4 H14.5" stroke="#8c8c8c" stroke-width="2.0"/><path d="M3 18.2 H17" stroke="#8c8c8c" stroke-width="2.0"/></svg>
<svg class="b" style="left:432.00px;top:89.00px;" width="20" height="19" viewBox="0 0 20 19"><text x="2.2" y="10.2" font-family="Liberation Sans" font-size="9.5" font-weight="700" fill="#e4e4e4" transform="rotate(-35 6 8)">ab</text><path d="M5 17 L16.2 5.8 M16.6 5.4 L12.6 6.2 M16.6 5.4 L15.8 9.4" stroke="#9fb4d8" stroke-width="1.5" fill="none" stroke-linecap="round"/></svg>
<svg class="b" style="left:455.40px;top:96.90px;" width="8" height="4.6" viewBox="0 0 8 4.6"><path d="M0.3 0.3 H7.7 L4.0 4.3999999999999995z" fill="#f6f6f6"/></svg>
<div class="b" style="left:485.90px;top:83.00px;width:1.40px;height:61.00px;background:#4a4a4a"></div>
<svg class="b" style="left:495.00px;top:90.60px;" width="18.5" height="18" viewBox="0 0 18.5 18"><path d="M1.4 1.8 V16.2 M17 1.8 V16.2" stroke="#e4e4e4" stroke-width="1.5"/><path d="M4.4 4.6 H10.6 Q14 4.6 14 8 Q14 11.4 10.6 11.4 H7.6" fill="none" stroke="#7fb2e6" stroke-width="1.7"/><path d="M9.6 8.6 L6.8 11.4 L9.6 14.2" fill="none" stroke="#7fb2e6" stroke-width="1.6" stroke-linejoin="round" stroke-linecap="round"/><path d="M4.4 14.4 H6" stroke="#e4e4e4" stroke-width="1.5"/></svg>
<span class="t" style="left:514.60px;top:93.00px;font-size:13px;line-height:13px;font-weight:700;color:#fff;transform:scaleX(0.8382);">Zawijaj tekst</span>
<svg class="b" style="left:353.40px;top:119.40px;" width="20" height="20" viewBox="0 0 20 20"><path d="M2.5 3.8 H17.5" stroke="#f2f2f2" stroke-width="2.0"/><path d="M2.5 7.8 H11" stroke="#f2f2f2" stroke-width="2.0"/><path d="M2.5 11.8 H17.5" stroke="#f2f2f2" stroke-width="2.0"/><path d="M2.5 15.8 H11" stroke="#f2f2f2" stroke-width="2.0"/></svg>
<div class="b" style="left:377.40px;top:117.40px;width:24.80px;height:24.80px;background:#2a2a2a;border:2px solid #9a9a9a;border-radius:4px"></div>
<svg class="b" style="left:379.60px;top:119.40px;" width="20" height="20" viewBox="0 0 20 20"><path d="M2.5 3.8 H17.5" stroke="#f2f2f2" stroke-width="2.0"/><path d="M5.6 7.8 H14.4" stroke="#f2f2f2" stroke-width="2.0"/><path d="M2.5 11.8 H17.5" stroke="#f2f2f2" stroke-width="2.0"/><path d="M5.6 15.8 H14.4" stroke="#f2f2f2" stroke-width="2.0"/></svg>
<svg class="b" style="left:405.40px;top:119.40px;" width="20" height="20" viewBox="0 0 20 20"><path d="M2.5 3.8 H17.5" stroke="#f2f2f2" stroke-width="2.0"/><path d="M9 7.8 H17.5" stroke="#f2f2f2" stroke-width="2.0"/><path d="M2.5 11.8 H17.5" stroke="#f2f2f2" stroke-width="2.0"/><path d="M9 15.8 H17.5" stroke="#f2f2f2" stroke-width="2.0"/></svg>
<div class="b" style="left:427.90px;top:118.00px;width:1.40px;height:24.00px;background:#4a4a4a"></div>
<svg class="b" style="left:433.40px;top:119.40px;" width="20" height="20" viewBox="0 0 20 20"><path d="M2.5 3.8 H17.5" stroke="#f2f2f2" stroke-width="2.0"/><path d="M10 7.8 H17.5" stroke="#f2f2f2" stroke-width="2.0"/><path d="M10 11.8 H17.5" stroke="#f2f2f2" stroke-width="2.0"/><path d="M2.5 15.8 H17.5" stroke="#f2f2f2" stroke-width="2.0"/></svg>
<svg class="b" style="left:434.40px;top:125.60px;" width="8" height="8" viewBox="0 0 8 8"><path d="M6.4 3.8 H1.2 M3.4 1.4 L1 3.8 L3.4 6.2" stroke="#9ab8e0" stroke-width="1.4" fill="none"/></svg>
<svg class="b" style="left:458.60px;top:119.40px;" width="20" height="20" viewBox="0 0 20 20"><path d="M2.5 3.8 H17.5" stroke="#f2f2f2" stroke-width="2.0"/><path d="M10 7.8 H17.5" stroke="#f2f2f2" stroke-width="2.0"/><path d="M10 11.8 H17.5" stroke="#f2f2f2" stroke-width="2.0"/><path d="M2.5 15.8 H17.5" stroke="#f2f2f2" stroke-width="2.0"/></svg>
<svg class="b" style="left:459.80px;top:125.60px;" width="8" height="8" viewBox="0 0 8 8"><path d="M1 3.8 H6.4 M4.2 1.4 L6.6 3.8 L4.2 6.2" stroke="#9ab8e0" stroke-width="1.4" fill="none"/></svg>
<svg class="b" style="left:495.00px;top:121.00px;" width="18.5" height="18" viewBox="0 0 18.5 18"><rect x="1.2" y="1.4" width="16" height="15" rx="1" fill="none" stroke="#e4e4e4" stroke-width="1.6"/><rect x="2" y="5.4" width="14.4" height="7" fill="#2f6fb8"/><path d="M4.4 9 H14 M6.2 7.2 L4.2 9 L6.2 10.8 M12.2 7.2 L14.2 9 L12.2 10.8" stroke="#e8f0ff" stroke-width="1.2" fill="none"/></svg>
<span class="t" style="left:514.60px;top:124.00px;font-size:13px;line-height:13px;font-weight:700;color:#fff;transform:scaleX(0.8088);">Scal i wyśrodkuj</span>
<svg class="b" style="left:613.20px;top:127.90px;" width="8.0" height="5.5" viewBox="0 0 8.0 5.5"><path d="M1 1 L4.0 3.5 L7.0 1" fill="none" stroke="#f0f0f0" stroke-width="1.8" stroke-linecap="round" stroke-linejoin="round"/></svg>
<span class="t" style="left:691.10px;top:158.27px;font-size:11.5px;line-height:11.5px;font-weight:700;color:#fff;transform:scaleX(0.8660);">Liczba</span>
<svg class="b" style="left:780.20px;top:157.60px;" width="10" height="10" viewBox="0 0 10 10"><path d="M1 8.4 V1 H8.4" fill="none" stroke="#f2f2f2" stroke-width="2"/><path d="M4 9 H9 V4 M9 9 L4.4 4.4" fill="none" stroke="#f2f2f2" stroke-width="1.9"/><rect x="5.4" y="5.4" width="3.6" height="3.6" fill="#f2f2f2"/></svg>
<div class="b" style="left:643.20px;top:86.60px;width:141.00px;height:23.80px;background:#252525;border:1.8px solid #666;border-radius:4.5px"></div>
<span class="t" style="left:647.20px;top:93.12px;font-size:12.5px;line-height:12.5px;font-weight:700;color:#fff;transform:scaleX(0.8495);">Liczbowe</span>
<svg class="b" style="left:775.40px;top:97.10px;" width="8" height="4.6" viewBox="0 0 8 4.6"><path d="M0.3 0.3 H7.7 L4.0 4.3999999999999995z" fill="#f6f6f6"/></svg>
<svg class="b" style="left:645.50px;top:121.00px;" width="20" height="19" viewBox="0 0 20 19"><rect x="1.4" y="2.2" width="15.6" height="11" rx="1" fill="#3a3a3a" stroke="#f4f4f4" stroke-width="2.3"/><circle cx="6.6" cy="7.6" r="2.1" fill="#f4f4f4"/><ellipse cx="13.4" cy="12.4" rx="4.4" ry="2.1" fill="#efe39a"/><path d="M9 12.4 V15.6 Q9 17.6 13.4 17.6 Q17.8 17.6 17.8 15.6 V12.4" fill="#efe39a"/><path d="M9.6 14.6 Q13.4 16.4 17.2 14.6" stroke="#8a7f3a" stroke-width="0.8" fill="none"/></svg>
<svg class="b" style="left:670.20px;top:128.30px;" width="8" height="4.6" viewBox="0 0 8 4.6"><path d="M0.3 0.3 H7.7 L4.0 4.3999999999999995z" fill="#f6f6f6"/></svg>
<span class="t" style="left:688.40px;top:121.12px;font-size:19px;line-height:19px;font-weight:400;color:#fff;transform:scaleX(0.9464);text-shadow:0 0 0.6px #fff;">%</span>
<span class="t" style="left:712.20px;top:125.56px;font-size:9.5px;line-height:9.5px;font-weight:700;color:#b4b4b4;transform:scaleX(1.0341);">000</span>
<div class="b" style="left:733.50px;top:118.00px;width:1.40px;height:24.00px;background:#4a4a4a"></div>
<svg class="b" style="left:737.50px;top:120.00px;" width="22" height="20" viewBox="0 0 22 20"><path d="M2.4 6 H7.4 M4.9 3.5 V8.5" stroke="#8db6ea" stroke-width="1.6"/><text x="10.4" y="9" font-family="Liberation Sans" font-size="8.5" font-weight="700" fill="#f0f0f0">,0</text><text x="6.4" y="18" font-family="Liberation Sans" font-size="8.5" font-weight="700" fill="#f0f0f0">,00</text></svg>
<svg class="b" style="left:763.50px;top:120.00px;" width="22" height="20" viewBox="0 0 22 20"><text x="7.4" y="9" font-family="Liberation Sans" font-size="8.5" font-weight="700" fill="#f0f0f0">,00</text><path d="M2.4 14.2 H8.4 M4.8 11.8 L2.2 14.2 L4.8 16.6" stroke="#8db6ea" stroke-width="1.6" fill="none"/><text x="11" y="18" font-family="Liberation Sans" font-size="8.5" font-weight="700" fill="#f0f0f0">,0</text></svg>
<span class="t" style="left:896.80px;top:158.27px;font-size:11.5px;line-height:11.5px;font-weight:700;color:#fff;transform:scaleX(0.8727);">Style</span>
<svg class="b" style="left:826.10px;top:85.45px;" width="29" height="24.5" viewBox="0 0 29 24.5"><rect x="0.4" y="0.4" width="28.2" height="23.7" rx="2" fill="#f0ece8"/><rect x="2.20" y="2.20" width="5.03" height="5.70" rx="1.6" fill="#0d0d0d"/><rect x="8.73" y="2.20" width="5.03" height="5.70" rx="1.6" fill="#e2222e"/><rect x="15.25" y="2.20" width="5.03" height="5.70" rx="1.6" fill="#e2222e"/><rect x="21.78" y="2.20" width="5.03" height="5.70" rx="1.6" fill="#0d0d0d"/><rect x="2.20" y="9.40" width="5.03" height="5.70" rx="1.6" fill="#0d0d0d"/><rect x="8.73" y="9.40" width="5.03" height="5.70" rx="1.6" fill="#3a7fe0"/><rect x="15.25" y="9.40" width="5.03" height="5.70" rx="1.6" fill="#3a7fe0"/><rect x="21.78" y="9.40" width="5.03" height="5.70" rx="1.6" fill="#0d0d0d"/><rect x="2.20" y="16.60" width="5.03" height="5.70" rx="1.6" fill="#0d0d0d"/><rect x="8.73" y="16.60" width="5.03" height="5.70" rx="1.6" fill="#e2222e"/><rect x="15.25" y="16.60" width="5.03" height="5.70" rx="1.6" fill="#e2222e"/><rect x="21.78" y="16.60" width="5.03" height="5.70" rx="1.6" fill="#0d0d0d"/><rect x="8.6" y="2.2" width="11.8" height="20" fill="#e2222e" opacity="0.55"/><rect x="7.4" y="9.6" width="14.2" height="5.2" fill="#3a7fe0"/><rect x="13" y="9.6" width="3" height="5.2" fill="#b83a4a"/></svg>
<span class="t" style="left:804.00px;top:119.24px;font-size:12px;line-height:12px;font-weight:700;color:#fff;transform:scaleX(0.9022);">Formatowanie</span>
<span class="t" style="left:806.00px;top:133.84px;font-size:12px;line-height:12px;font-weight:700;color:#fff;transform:scaleX(0.9088);">warunkowe</span>
<svg class="b" style="left:868.40px;top:138.10px;" width="7.2" height="5.1" viewBox="0 0 7.2 5.1"><path d="M1 1 L3.6 3.1 L6.2 1" fill="none" stroke="#f4f4f4" stroke-width="2.0" stroke-linecap="round" stroke-linejoin="round"/></svg>
<svg class="b" style="left:905.35px;top:86.00px;" width="28.5" height="24" viewBox="0 0 28.5 24"><rect x="0.4" y="0.4" width="27.7" height="23.2" rx="2" fill="#f0ece8"/><rect x="2.20" y="2.20" width="4.90" height="5.53" rx="1.6" fill="#0d0d0d"/><rect x="8.60" y="2.20" width="4.90" height="5.53" rx="1.6" fill="#0d0d0d"/><rect x="15.00" y="2.20" width="4.90" height="5.53" rx="1.6" fill="#0d0d0d"/><rect x="21.40" y="2.20" width="4.90" height="5.53" rx="1.6" fill="#0d0d0d"/><rect x="2.20" y="9.23" width="4.90" height="5.53" rx="1.6" fill="#0d0d0d"/><rect x="8.60" y="9.23" width="4.90" height="5.53" rx="1.6" fill="#3a7fe0"/><rect x="15.00" y="9.23" width="4.90" height="5.53" rx="1.6" fill="#3a7fe0"/><rect x="21.40" y="9.23" width="4.90" height="5.53" rx="1.6" fill="#3a7fe0"/><rect x="2.20" y="16.27" width="4.90" height="5.53" rx="1.6" fill="#0d0d0d"/><rect x="8.60" y="16.27" width="4.90" height="5.53" rx="1.6" fill="#3a7fe0"/><rect x="15.00" y="16.27" width="4.90" height="5.53" rx="1.6" fill="#3a7fe0"/><rect x="21.40" y="16.27" width="4.90" height="5.53" rx="1.6" fill="#3a7fe0"/><path d="M13.4 19.2 L24.2 7.2 Q25.8 5.8 27.2 7.2 Q28.4 8.8 27 10.2 L16 21.8 L12.4 23z" fill="#20272f" stroke="#9ccbf6" stroke-width="1.6" stroke-linejoin="round"/></svg>
<span class="t" style="left:883.00px;top:119.24px;font-size:12px;line-height:12px;font-weight:700;color:#fff;transform:scaleX(0.9201);">Formatuj jako</span>
<span class="t" style="left:899.60px;top:133.84px;font-size:12px;line-height:12px;font-weight:700;color:#fff;transform:scaleX(0.9341);">tabelę</span>
<svg class="b" style="left:935.80px;top:138.10px;" width="7.2" height="5.1" viewBox="0 0 7.2 5.1"><path d="M1 1 L3.6 3.1 L6.2 1" fill="none" stroke="#f4f4f4" stroke-width="2.0" stroke-linecap="round" stroke-linejoin="round"/></svg>
<svg class="b" style="left:973.60px;top:85.20px;" width="30" height="26" viewBox="0 0 30 26"><path d="M2.6 1.4 H23.6 Q25 1.4 25.4 2.6 L27 6.4 Q27.4 7.6 26.4 8.6 L14 23.6 L2.4 19 Q1.2 18.4 1.2 17 V2.8 Q1.2 1.4 2.6 1.4z" fill="none" stroke="#ececec" stroke-width="1.7" stroke-linejoin="round"/><path d="M1.6 6.2 H26.4 M7.4 1.6 V20 M14 1.6 V6" stroke="#ececec" stroke-width="1.1" stroke-dasharray="2 1.3"/><path d="M8 7 H22 L12.6 19.4 L8 17.6z" fill="#2f78d0"/><path d="M12.6 17.6 L23.4 6 Q24.8 4.8 26 6 Q27 7.4 25.8 8.6 L15 20.2 L11.8 21.2z" fill="#20272f" stroke="#86bdf2" stroke-width="1.4" stroke-linejoin="round"/></svg>
<span class="t" style="left:974.00px;top:119.24px;font-size:12px;line-height:12px;font-weight:700;color:#fff;transform:scaleX(0.9760);">Style</span>
<span class="t" style="left:961.80px;top:133.84px;font-size:12px;line-height:12px;font-weight:700;color:#fff;transform:scaleX(0.8910);">komórki</span>
<svg class="b" style="left:1007.00px;top:138.10px;" width="7.2" height="5.1" viewBox="0 0 7.2 5.1"><path d="M1 1 L3.6 3.1 L6.2 1" fill="none" stroke="#f4f4f4" stroke-width="2.0" stroke-linecap="round" stroke-linejoin="round"/></svg>
<span class="t" style="left:1081.50px;top:158.27px;font-size:11.5px;line-height:11.5px;font-weight:700;color:#fff;transform:scaleX(0.8788);">Komórki</span>
<svg class="b" style="left:1039.25px;top:86.30px;" width="29.5" height="23" viewBox="0 0 29.5 23"><rect x="0.4" y="0.4" width="28.7" height="22.2" rx="2" fill="#f0ece8"/><rect x="2.20" y="2.20" width="7.37" height="5.20" rx="1.6" fill="#0d0d0d"/><rect x="11.07" y="2.20" width="7.37" height="5.20" rx="1.6" fill="#0d0d0d"/><rect x="19.93" y="2.20" width="7.37" height="5.20" rx="1.6" fill="#0d0d0d"/><rect x="2.20" y="8.90" width="7.37" height="5.20" rx="1.6" fill="#2f7fe0"/><rect x="11.07" y="8.90" width="7.37" height="5.20" rx="1.6" fill="#2f7fe0"/><rect x="19.93" y="8.90" width="7.37" height="5.20" rx="1.6" fill="#2f7fe0"/><rect x="2.20" y="15.60" width="7.37" height="5.20" rx="1.6" fill="#0d0d0d"/><rect x="11.07" y="15.60" width="7.37" height="5.20" rx="1.6" fill="#0d0d0d"/><rect x="19.93" y="15.60" width="7.37" height="5.20" rx="1.6" fill="#0d0d0d"/><rect x="1.4" y="9.2" width="26.8" height="4.6" fill="#2f7fe0"/><path d="M0.4 11.5 H12" stroke="#a8d4ff" stroke-width="1.6"/></svg>
<span class="t" style="left:1036.60px;top:119.24px;font-size:12px;line-height:12px;font-weight:700;color:#fff;transform:scaleX(0.8944);">Wstaw</span>
<svg class="b" style="left:1050.00px;top:138.30px;" width="7.2" height="5.1" viewBox="0 0 7.2 5.1"><path d="M1 1 L3.6 3.1 L6.2 1" fill="none" stroke="#f4f4f4" stroke-width="2.0" stroke-linecap="round" stroke-linejoin="round"/></svg>
<svg class="b" style="left:1081.50px;top:86.30px;" width="29" height="23" viewBox="0 0 29 23"><rect x="0.4" y="0.4" width="28.2" height="22.2" rx="2" fill="#f0ece8"/><rect x="2.20" y="2.20" width="7.20" height="5.20" rx="1.6" fill="#0d0d0d"/><rect x="10.90" y="2.20" width="7.20" height="5.20" rx="1.6" fill="#0d0d0d"/><rect x="19.60" y="2.20" width="7.20" height="5.20" rx="1.6" fill="#0d0d0d"/><rect x="2.20" y="8.90" width="7.20" height="5.20" rx="1.6" fill="#0d0d0d"/><rect x="10.90" y="8.90" width="7.20" height="5.20" rx="1.6" fill="#2f7fe0"/><rect x="19.60" y="8.90" width="7.20" height="5.20" rx="1.6" fill="#2f7fe0"/><rect x="2.20" y="15.60" width="7.20" height="5.20" rx="1.6" fill="#0d0d0d"/><rect x="10.90" y="15.60" width="7.20" height="5.20" rx="1.6" fill="#0d0d0d"/><rect x="19.60" y="15.60" width="7.20" height="5.20" rx="1.6" fill="#0d0d0d"/><rect x="10" y="9.2" width="12" height="4.6" fill="#3a86e4"/><path d="M21.6 7.4 L27 14.4 M27 7.4 L21.6 14.4" stroke="#c8326a" stroke-width="1.9"/></svg>
<span class="t" style="left:1082.00px;top:119.24px;font-size:12px;line-height:12px;font-weight:700;color:#fff;transform:scaleX(0.9200);">Usuń</span>
<svg class="b" style="left:1092.20px;top:138.30px;" width="7.2" height="5.1" viewBox="0 0 7.2 5.1"><path d="M1 1 L3.6 3.1 L6.2 1" fill="none" stroke="#f4f4f4" stroke-width="2.0" stroke-linecap="round" stroke-linejoin="round"/></svg>
<svg class="b" style="left:1129.50px;top:85.10px;" width="29" height="25" viewBox="0 0 29 25"><rect x="0.4" y="0.4" width="28.2" height="24.2" rx="2" fill="#f0ece8"/><rect x="2.20" y="2.20" width="4.15" height="5.87" rx="1.6" fill="#0d0d0d"/><rect x="7.85" y="2.20" width="13.29" height="5.87" rx="1.6" fill="#0d0d0d"/><rect x="22.65" y="2.20" width="4.15" height="5.87" rx="1.6" fill="#0d0d0d"/><rect x="2.20" y="9.57" width="4.15" height="5.87" rx="1.6" fill="#0d0d0d"/><rect x="7.85" y="9.57" width="13.29" height="5.87" rx="1.6" fill="#3a86e4"/><rect x="22.65" y="9.57" width="4.15" height="5.87" rx="1.6" fill="#0d0d0d"/><rect x="2.20" y="16.93" width="4.15" height="5.87" rx="1.6" fill="#0d0d0d"/><rect x="7.85" y="16.93" width="13.29" height="5.87" rx="1.6" fill="#0d0d0d"/><rect x="22.65" y="16.93" width="4.15" height="5.87" rx="1.6" fill="#0d0d0d"/><path d="M6.4 -2 H22.6" stroke="#6fa0cc" stroke-width="1.5"/></svg>
<span class="t" style="left:1120.80px;top:119.24px;font-size:12px;line-height:12px;font-weight:700;color:#fff;transform:scaleX(0.8959);">Formatuj</span>
<svg class="b" style="left:1140.20px;top:138.30px;" width="7.2" height="5.1" viewBox="0 0 7.2 5.1"><path d="M1 1 L3.6 3.1 L6.2 1" fill="none" stroke="#f4f4f4" stroke-width="2.0" stroke-linecap="round" stroke-linejoin="round"/></svg>
<span class="t" style="left:1229.00px;top:158.27px;font-size:11.5px;line-height:11.5px;font-weight:700;color:#fff;transform:scaleX(0.9232);">Edytowanie</span>
<span class="t" style="left:1191.10px;top:82.09px;font-size:19.5px;line-height:19.5px;font-weight:700;color:#fff;transform:scaleX(1.1108);">Σ</span>
<svg class="b" style="left:1216.20px;top:89.30px;" width="7.2" height="5.1" viewBox="0 0 7.2 5.1"><path d="M1 1 L3.6 3.1 L6.2 1" fill="none" stroke="#f4f4f4" stroke-width="2.0" stroke-linecap="round" stroke-linejoin="round"/></svg>
<svg class="b" style="left:1188.60px;top:108.00px;" width="18.5" height="16" viewBox="0 0 18.5 16"><rect x="1.5" y="1.5" width="15.4" height="12.8" rx="1.6" fill="#1c1c1c" stroke="#f6f6f6" stroke-width="2.7"/><path d="M9.2 4.2 V10.2 M6.8 8.2 L9.2 10.6 L11.6 8.2" stroke="#e8e8e8" stroke-width="1.6" fill="none"/></svg>
<svg class="b" style="left:1209.20px;top:114.30px;" width="7.2" height="5.1" viewBox="0 0 7.2 5.1"><path d="M1 1 L3.6 3.1 L6.2 1" fill="none" stroke="#f4f4f4" stroke-width="2.0" stroke-linecap="round" stroke-linejoin="round"/></svg>
<svg class="b" style="left:1187.60px;top:132.40px;" width="18" height="17" viewBox="0 0 18 17"><g transform="rotate(-40 9 8.5)"><rect x="1.6" y="4.6" width="14.6" height="8" rx="1.4" fill="none" stroke="#d79be8" stroke-width="2.5"/><path d="M7 4.6 V12.6" stroke="#d79be8" stroke-width="2"/></g></svg>
<svg class="b" style="left:1208.80px;top:138.70px;" width="7.2" height="5.1" viewBox="0 0 7.2 5.1"><path d="M1 1 L3.6 3.1 L6.2 1" fill="none" stroke="#f4f4f4" stroke-width="2.0" stroke-linecap="round" stroke-linejoin="round"/></svg>
<span class="t" style="left:1241.10px;top:84.89px;font-size:11px;line-height:11px;font-weight:400;color:#86a9cc;transform:scaleX(1.1166);">A</span>
<span class="t" style="left:1241.70px;top:98.17px;font-size:13.5px;line-height:13.5px;font-weight:700;color:#fff;transform:scaleX(1.0909);">Z</span>
<svg class="b" style="left:1252.00px;top:89.40px;" width="20" height="20" viewBox="0 0 20 20"><path d="M1.8 1.8 H17.6 L11.8 8.8 V16 L7.6 13.6 V8.8z" fill="#1c1c1c" stroke="#f6f6f6" stroke-width="2.5" stroke-linejoin="round"/></svg>
<span class="t" style="left:1236.40px;top:119.24px;font-size:12px;line-height:12px;font-weight:700;color:#fff;transform:scaleX(0.8901);">Sortuj i</span>
<span class="t" style="left:1235.80px;top:133.84px;font-size:12px;line-height:12px;font-weight:700;color:#fff;transform:scaleX(0.9067);">filtruj</span>
<svg class="b" style="left:1266.00px;top:138.10px;" width="7.2" height="5.1" viewBox="0 0 7.2 5.1"><path d="M1 1 L3.6 3.1 L6.2 1" fill="none" stroke="#f4f4f4" stroke-width="2.0" stroke-linecap="round" stroke-linejoin="round"/></svg>
</div></div></body></html>
